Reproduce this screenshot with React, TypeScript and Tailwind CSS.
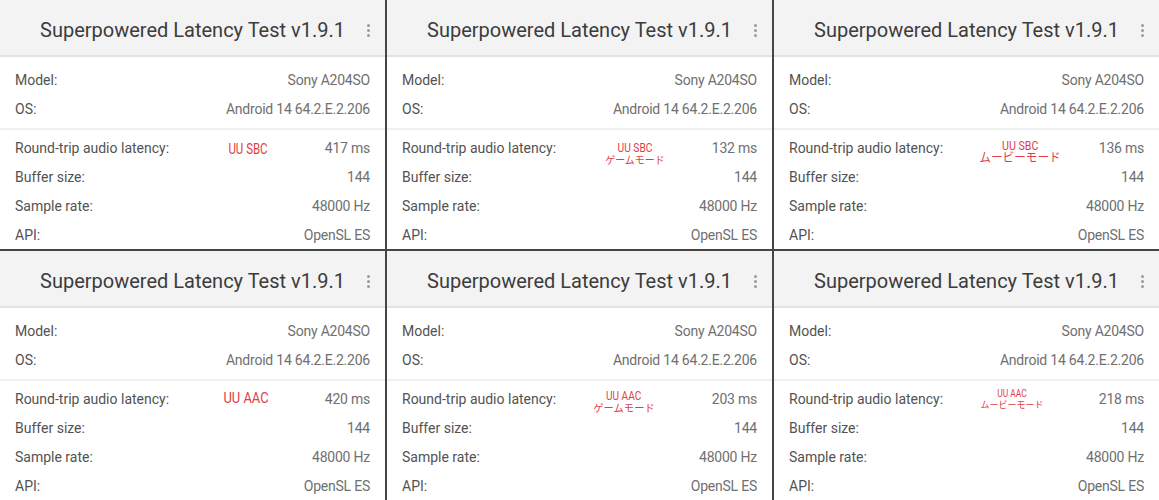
import React from "react";

type Note = {
  box: string;
  lines: { text: string; cls: string }[];
};

type Panel = {
  latency: string;
  note: Note;
};

const panels: Panel[] = [
  {
    latency: "417 ms",
    note: {
      box: "left-[248px] top-[140px] leading-[18px]",
      lines: [{ text: "UU SBC", cls: "text-[14px] scale-x-[0.82]" }],
    },
  },
  {
    latency: "132 ms",
    note: {
      box: "left-[248px] top-[141px] leading-[13px]",
      lines: [
        { text: "UU SBC", cls: "text-[12.5px] scale-x-[0.82]" },
        { text: "ゲームモード", cls: "text-[10.5px] scale-x-[0.95]" },
      ],
    },
  },
  {
    latency: "136 ms",
    note: {
      box: "left-[246px] top-[139px] leading-[13px]",
      lines: [
        { text: "UU SBC", cls: "text-[13px] scale-x-[0.82]" },
        { text: "ムービーモード", cls: "text-[12px] scale-x-[0.97]" },
      ],
    },
  },
  {
    latency: "420 ms",
    note: {
      box: "left-[246px] top-[138px] leading-[18px]",
      lines: [{ text: "UU AAC", cls: "text-[15px] scale-x-[0.86]" }],
    },
  },
  {
    latency: "203 ms",
    note: {
      box: "left-[237px] top-[139px] leading-[12.5px]",
      lines: [
        { text: "UU AAC", cls: "text-[12px] scale-x-[0.84]" },
        { text: "ゲームモード", cls: "text-[10.5px] scale-x-[0.98]" },
      ],
    },
  },
  {
    latency: "218 ms",
    note: {
      box: "left-[238px] top-[138px] leading-[10.5px]",
      lines: [
        { text: "UU AAC", cls: "text-[10px] scale-x-[0.84]" },
        { text: "ムービーモード", cls: "text-[9px] scale-x-[1]" },
      ],
    },
  },
];

function Row({ label, value }: { label: string; value: string }) {
  return (
    <div className="h-[29px] flex items-center justify-between pl-[15px] pr-[15px] text-[14px]">
      <span className="text-[#525252]">{label}</span>
      <span className="text-[#707070] tracking-[-0.22px]">{value}</span>
    </div>
  );
}

function LatencyPanel({ panel }: { panel: Panel }) {
  return (
    <div className="relative bg-white overflow-hidden">
      {/* App bar */}
      <div className="h-[57px] bg-[#f3f3f3] border-b-2 border-[#e2e2e2] flex items-center justify-end pr-[15px] pt-[5px]">
        <span className="text-[20px] text-[#3c3c3c]">Superpowered Latency Test v1.9.1</span>
        <div className="ml-[22px] flex flex-col gap-[2px]">
          <span className="w-[3px] h-[3px] rounded-full bg-[#9a9a9a]" />
          <span className="w-[3px] h-[3px] rounded-full bg-[#9a9a9a]" />
          <span className="w-[3px] h-[3px] rounded-full bg-[#9a9a9a]" />
        </div>
      </div>

      <div className="pt-[9px]">
        <Row label="Model:" value="Sony A204SO" />
        <Row label="OS:" value="Android 14 64.2.E.2.206" />
        <div className="my-[4px] h-[2px] bg-[#f0f0f0]" />
        <Row label="Round-trip audio latency:" value={panel.latency} />
        <Row label="Buffer size:" value="144" />
        <Row label="Sample rate:" value="48000 Hz" />
        <Row label="API:" value="OpenSL ES" />
      </div>

      {/* hand-added annotation */}
      <div
        className={`absolute -translate-x-1/2 flex flex-col items-center text-[#e23d47] whitespace-nowrap ${panel.note.box}`}
        style={{ fontFamily: 'Roboto, "Noto Sans CJK JP", sans-serif' }}
      >
        {panel.note.lines.map((l, i) => (
          <span key={i} className={`block ${l.cls}`}>
            {l.text}
          </span>
        ))}
      </div>
    </div>
  );
}

export default function App() {
  return (
    <div
      className="w-[1159px] h-[500px] grid grid-cols-3 grid-rows-[249px_249px] gap-[2px] bg-[#454545]"
      style={{ fontFamily: 'Roboto, "Noto Sans CJK JP", sans-serif' }}
    >
      {panels.map((p, i) => (
        <LatencyPanel key={i} panel={p} />
      ))}
    </div>
  );
}
